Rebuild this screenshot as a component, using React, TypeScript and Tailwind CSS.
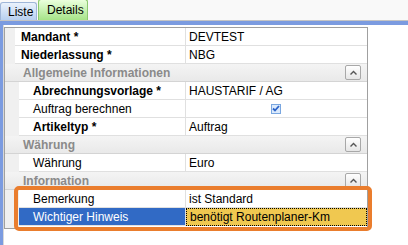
import React from 'react';

const font = { fontFamily: '"Liberation Sans", Tahoma, Arial, sans-serif' };

const CollapseButton: React.FC = () => (
  <div className="mr-[6px] flex h-[15px] w-[16px] items-center justify-center rounded-[2px] border border-[#a8a8a8] bg-gradient-to-b from-white to-[#e6e6e6]">
    <svg width="7" height="5" viewBox="0 0 7 5">
      <path d="M0.5 4.5 L3.5 1.5 L6.5 4.5" fill="none" stroke="#555" strokeWidth="1.4" />
    </svg>
  </div>
);

const SectionHeader: React.FC<{ title: string }> = ({ title }) => (
  <div className="flex h-[18px] items-center justify-between border-b border-[#d4d4d4] bg-gradient-to-b from-[#f4f4f4] to-[#e9e9e9]">
    <span className="pl-[18px] text-[12px] font-bold text-[#8a8a8a]">{title}</span>
    <CollapseButton />
  </div>
);

type RowProps = {
  label: string;
  bold?: boolean;
  indent?: 'top' | 'sub';
  children?: React.ReactNode;
  selected?: boolean;
};

const Row: React.FC<RowProps> = ({ label, bold, indent = 'sub', children, selected }) => (
  <div className="flex h-[18px]">
    <div className={`${indent === 'top' ? 'w-[10px]' : 'w-[14px]'} shrink-0 bg-[#f0f0f0]`} />
    <div
      className={`flex items-center border-b border-r border-[#e0e0e0] ${
        indent === 'top' ? 'w-[171px] pl-[6px]' : 'w-[167px] pl-[14px]'
      } ${selected ? 'bg-[#316ac5] text-white' : 'bg-white text-black'} ${bold ? 'font-bold' : ''}`}
    >
      <span className="text-[12px] whitespace-nowrap">{label}</span>
    </div>
    <div
      className={`flex flex-1 items-center pl-[3px] text-[12px] whitespace-nowrap ${
        selected ? 'border border-dotted border-black bg-[#f0c850]' : 'border-b border-[#e0e0e0] bg-white'
      }`}
    >
      {children}
    </div>
  </div>
);

const Checkbox: React.FC = () => (
  <div className="ml-[82px] flex h-[10px] w-[10px] items-center justify-center border border-[#7aa7e0] bg-[#dbeafc]">
    <svg width="8" height="7" viewBox="0 0 8 7">
      <path d="M1 3.5 L3 5.5 L7 1" fill="none" stroke="#2a62c8" strokeWidth="1.8" />
    </svg>
  </div>
);

const App: React.FC = () => {
  return (
    <div className="relative h-[245px] w-[408px] overflow-hidden bg-white" style={font}>
      {/* tab strip */}
      <div className="flex h-[21px] items-end border-b border-[#c4c4c4] bg-[#f9f9f9]">
        <div className="flex h-[18px] w-[37px] items-center rounded-t-[3px] border border-b-0 border-[#9fb6d8] bg-gradient-to-b from-[#eaf2fc] to-[#b8d0f0] pl-[7px] text-[12px] text-black">
          Liste
        </div>
        <div className="ml-[1px] flex h-[21px] w-[50px] items-center rounded-t-[3px] border border-b-0 border-[#8cc870] bg-gradient-to-b from-[#eaffdc] to-[#a6e488] pl-[8px] text-[12px] text-black">
          Details
        </div>
      </div>
      <div className="h-[4px] bg-[#7b9be0]" />

      <div className="flex h-[220px]">
        <div className="w-[3px] shrink-0 bg-[#7b9be0]" />
        <div className="w-[1px] shrink-0 bg-[#d8d8d8]" />
        <div className="pt-[2px]">
          <div className="w-[364px] border border-[#a0a0a0]">
            <Row label="Mandant *" bold indent="top">DEVTEST</Row>
            <Row label="Niederlassung *" bold indent="top">NBG</Row>
            <SectionHeader title="Allgemeine Informationen" />
            <Row label="Abrechnungsvorlage *" bold>HAUSTARIF / AG</Row>
            <Row label="Auftrag berechnen"><Checkbox /></Row>
            <Row label="Artikeltyp *" bold>Auftrag</Row>
            <SectionHeader title="Währung" />
            <Row label="Währung">Euro</Row>
            <SectionHeader title="Information" />
            <Row label="Bemerkung">ist Standard</Row>
            <Row label="Wichtiger Hinweis" selected>benötigt Routenplaner-Km</Row>
            <div className="h-[2px] w-[14px] bg-[#f0f0f0]" />
          </div>
        </div>
      </div>

      {/* orange highlight overlay */}
      <div className="pointer-events-none absolute left-[14px] top-[186px] h-[45px] w-[358px] rounded-[5px] border-[4px] border-[#ea7d2d]" />
    </div>
  );
};

export default App;
